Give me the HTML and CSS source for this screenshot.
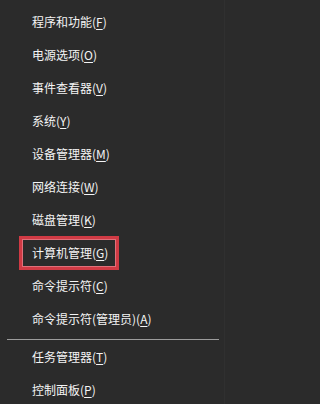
FILE: index.html
```html
<!DOCTYPE html>
<html lang="zh-CN">
<head>
<meta charset="utf-8">
<title>Win+X 菜单</title>
<link rel="stylesheet" href="styles.css">
</head>
<body>
<div class="menu">
  <ul class="group">
    <li class="item">程序和功能(<u>F</u>)</li>
    <li class="item">电源选项(<u>O</u>)</li>
    <li class="item">事件查看器(<u>V</u>)</li>
    <li class="item">系统(<u>Y</u>)</li>
    <li class="item">设备管理器(<u>M</u>)</li>
    <li class="item">网络连接(<u>W</u>)</li>
    <li class="item">磁盘管理(<u>K</u>)</li>
    <li class="item marked">计算机管理(<u>G</u>)</li>
    <li class="item">命令提示符(<u>C</u>)</li>
    <li class="item">命令提示符(管理员)(<u>A</u>)</li>
  </ul>
  <div class="separator"></div>
  <ul class="group">
    <li class="item">任务管理器(<u>T</u>)</li>
    <li class="item">控制面板(<u>P</u>)</li>
  </ul>
</div>
</body>
</html>
```
FILE: styles.css
```css
html, body {
  margin: 0;
  padding: 0;
  background: #2b2b2b;
}
body {
  width: 227px;
  height: 404px;
  overflow: hidden;
  font-family: "Noto Sans CJK SC", "Noto Sans", sans-serif;
  font-size: 12px;
  color: #f4f4f4;
}
.menu {
  display: flex;
  flex-direction: column;
  padding-top: 5px;
  border-right: 1px solid #303030;
  margin-right: 2px;
  height: 404px;
  box-sizing: border-box;
}
.group {
  list-style: none;
  margin: 0;
  padding: 0;
  display: flex;
  flex-direction: column;
}
.item {
  height: 33px;
  line-height: 33px;
  padding-left: 32px;
  white-space: nowrap;
  position: relative;
}
.item u {
  text-decoration: underline;
  text-decoration-thickness: 1px;
  text-underline-offset: 2px;
}
.marked::after {
  content: "";
  position: absolute;
  left: 19px;
  top: 0;
  width: 100px;
  height: 34px;
  box-sizing: border-box;
  border: 3px solid #d03a44;
  box-shadow: inset 0 0 0 1px #e0707a;
}
.separator {
  height: 10px;
  padding-top: 4px;
  box-sizing: border-box;
  margin: 0 5px 0 7px;
}
.separator::before {
  content: "";
  display: block;
  height: 1px;
  background: #9c9c9c;
}
```
